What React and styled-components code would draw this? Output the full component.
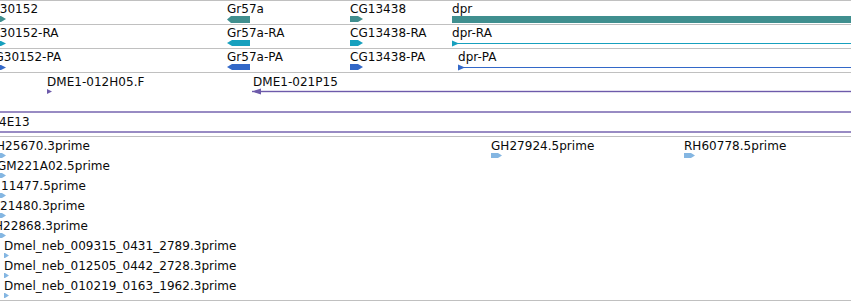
import React from 'react';
import styled, { createGlobalStyle } from 'styled-components';

const Global = createGlobalStyle`
  html, body { margin: 0; padding: 0; background: #ffffff; }
  body { font-family: "DejaVu Sans", "Liberation Sans", sans-serif; }
`;

const WIDTH = 851;
const ROW = 20;

const COLORS = {
  gene: '#408f8f',
  mrna: '#17a0be',
  pep: '#3368c8',
  clone: '#6d5aaa',
  est: '#84b6e2',
};

const Browser = styled.div`
  width: ${WIDTH}px;
  display: flex;
  flex-direction: column;
  overflow: hidden;
  border-bottom: 1px solid #c0c0c0;
`;

const Track = styled.div`
  position: relative;
  height: ${(p) => p.$h}px;
  border-top: 1px solid #c0c0c0;
  overflow: hidden;
`;

const Label = styled.span.attrs((p) => ({ style: { left: p.$x, top: p.$y } }))`
  position: absolute;
  font-family: "DejaVu Sans", "Liberation Sans", sans-serif;
  font-size: 12px;
  line-height: 12px;
  letter-spacing: 0.03px;
  color: #0a0a0a;
  white-space: nowrap;
`;

const GlyphSvg = styled.svg.attrs((p) => ({ style: { left: p.$x, top: p.$y } }))`
  position: absolute;
  display: block;
  overflow: visible;
`;

function arrowPoints(w, h, head, dir) {
  if (dir === 'right') {
    return `0,0 ${w - head},0 ${w},${h / 2} ${w - head},${h} 0,${h}`;
  }
  return `${head},0 ${w},0 ${w},${h} ${head},${h} 0,${h / 2}`;
}

function Arrow({ x, y, w, h, head = 4, dir = 'right', color }) {
  return (
    <GlyphSvg $x={x} $y={y} width={w} height={h} viewBox={`0 0 ${w} ${h}`}>
      <polygon points={arrowPoints(w, h, head, dir)} fill={color} />
    </GlyphSvg>
  );
}

function Bar({ x, y, w, h, color }) {
  return (
    <GlyphSvg $x={x} $y={y} width={w} height={h} viewBox={`0 0 ${w} ${h}`}>
      <rect x="0" y="0" width={w} height={h} fill={color} />
    </GlyphSvg>
  );
}

/* a small arrowhead followed by a thin intron line running off the right edge */
function HeadLine({ x, y, color, dir = 'right', thick = 1 }) {
  const w = WIDTH - x + 2;
  const h = 7;
  const mid = 3.5;
  const head =
    dir === 'right'
      ? `0,0.5 7,${mid} 0,6.5`
      : `0,${mid} 9,0.5 9,6.5`;
  return (
    <GlyphSvg $x={x} $y={y} width={w} height={h} viewBox={`0 0 ${w} ${h}`}>
      <rect x="0" y={mid - thick / 2} width={w} height={thick} fill={color} />
      <polygon points={head} fill={color} />
    </GlyphSvg>
  );
}

function Line({ y, color, thick = 1.4 }) {
  return (
    <GlyphSvg $x={0} $y={y} width={WIDTH} height={2} viewBox={`0 0 ${WIDTH} 2`}>
      <rect x="0" y={1 - thick / 2} width={WIDTH} height={thick} fill={color} />
    </GlyphSvg>
  );
}

const LT = 2; // label top inside a row
const GT = 15; // glyph top inside a row

function GeneTrack() {
  const c = COLORS.gene;
  return (
    <Track $h={23}>
      <Label $x={-18} $y={LT}>CG30152</Label>
      <Arrow x={-7} y={GT} w={13} h={6} head={5} color={c} />
      <Label $x={227} $y={LT}>Gr57a</Label>
      <Arrow x={227} y={GT} w={23} h={7} head={4} dir="left" color={c} />
      <Label $x={350} $y={LT}>CG13438</Label>
      <Arrow x={350} y={GT} w={13} h={6} head={5} color={c} />
      <Label $x={452} $y={LT}>dpr</Label>
      <Bar x={452} y={GT} w={WIDTH - 452} h={7} color={c} />
    </Track>
  );
}

function TranscriptTrack({ color, suffix, lastX, firstX }) {
  return (
    <Track $h={23}>
      <Label $x={firstX} $y={LT}>{`CG30152-${suffix}`}</Label>
      <Arrow x={-7} y={GT + 0.5} w={13} h={5} head={5} color={color} />
      <Label $x={227} $y={LT}>{`Gr57a-${suffix}`}</Label>
      <Arrow x={227} y={GT} w={23} h={6} head={5} dir="left" color={color} />
      <Label $x={350} $y={LT}>{`CG13438-${suffix}`}</Label>
      <Arrow x={350} y={GT} w={13} h={6} head={5} color={color} />
      <Label $x={lastX} $y={LT}>{`dpr-${suffix}`}</Label>
      <HeadLine x={lastX} y={GT - 0.5} color={color} />
    </Track>
  );
}

function CloneTrack() {
  const c = COLORS.clone;
  return (
    <Track $h={63}>
      <Label $x={47} $y={LT + 1}>DME1-012H05.F</Label>
      <Arrow x={47} y={GT + 0.5} w={5} h={5} head={5} color={c} />
      <Label $x={253} $y={LT + 1}>DME1-021P15</Label>
      <HeadLine x={252} y={GT - 0.5} color={c} dir="left" thick={1.4} />
      <Line y={GT + 2.5 + ROW} color={c} />
      <Label $x={-1} $y={LT + 1 + ROW * 2}>4E13</Label>
      <Line y={GT + 2.5 + ROW * 2} color={c} />
    </Track>
  );
}

const ESTS = [
  [{ x: -4, label: 'H25670.3prime', g: 0, w: 6 }, { x: 491, label: 'GH27924.5prime', g: 491, w: 11 }, { x: 684, label: 'RH60778.5prime', g: 684, w: 11 }],
  [{ x: -3, label: 'GM221A02.5prime', g: 0, w: 6 }],
  [{ x: 1, label: '11477.5prime', g: 0, w: 6 }],
  [{ x: 0, label: '21480.3prime', g: 0, w: 6 }],
  [{ x: -6, label: 'H22868.3prime', g: 0, w: 6 }],
  [{ x: 4, label: 'Dmel_neb_009315_0431_2789.3prime', g: 4, w: 5 }],
  [{ x: 4, label: 'Dmel_neb_012505_0442_2728.3prime', g: 4, w: 5 }],
  [{ x: 4, label: 'Dmel_neb_010219_0163_1962.3prime', g: 4, w: 5 }],
];

function EstTrack() {
  return (
    <Track $h={163}>
      {ESTS.map((row, r) =>
        row.map((f) => (
          <React.Fragment key={f.label}>
            <Label $x={f.x} $y={3 + r * ROW}>{f.label}</Label>
            <Arrow x={f.g} y={15.5 + r * ROW} w={f.w} h={5} head={4} color={COLORS.est} />
          </React.Fragment>
        ))
      )}
    </Track>
  );
}

export default function App() {
  return (
    <>
      <Global />
      <Browser>
        <GeneTrack />
        <TranscriptTrack color={COLORS.mrna} suffix="RA" firstX={-18} lastX={452} />
        <TranscriptTrack color={COLORS.pep} suffix="PA" firstX={-14} lastX={458} />
        <CloneTrack />
        <EstTrack />
      </Browser>
    </>
  );
}
